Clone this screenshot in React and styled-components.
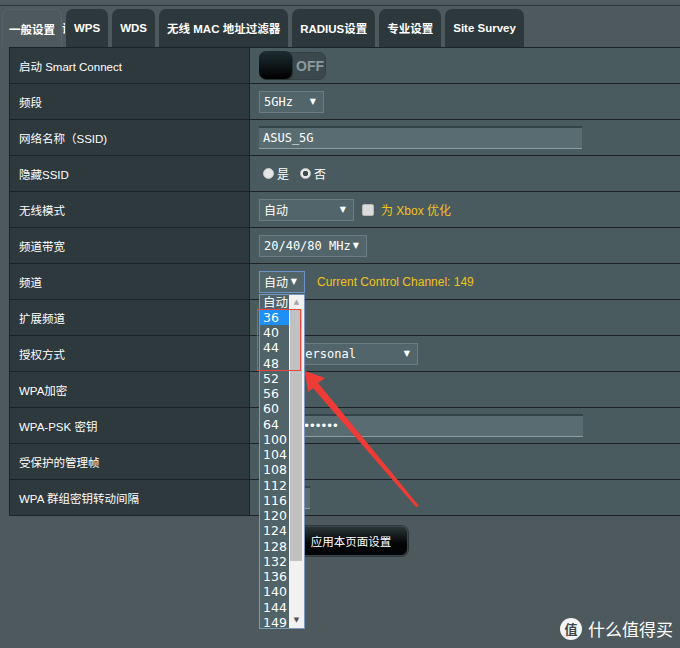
import React from "react";
import styled, { createGlobalStyle } from "styled-components";

const Global = createGlobalStyle`
  html, body { margin: 0; padding: 0; background: #4e595d; overflow: hidden; }
  body { width: 680px; height: 648px; font-family: "Liberation Sans", "Noto Sans CJK SC", sans-serif; }
  * { box-sizing: border-box; }
`;

const Page = styled.div`
  position: relative;
  width: 680px;
  height: 648px;
  overflow: hidden;
  background: #4e595d;
`;

const Frame = styled.div`
  margin-top: 5px;
  border-top: 1px solid #2c3538;
  padding-top: 3px;
  width: 700px;
`;

const TabBar = styled.div`
  display: flex;
  gap: 4px;
  height: 38px;
  padding-left: 2px;
`;

const Tab = styled.div`
  display: flex;
  align-items: center;
  padding: 0 ${(p) => (p.$active ? "6px" : "8px")};
  border-radius: 7px 7px 0 0;
  background: ${(p) => (p.$active ? "#4e595d" : "#2d383c")};
  border: ${(p) => (p.$active ? "1px solid #576266" : "none")};
  border-bottom: none;
  color: #fff;
  font-size: 11.5px;
  font-weight: bold;
  white-space: nowrap;
`;

const Sliver = styled.div`
  width: 3px;
  overflow: hidden;
  display: flex;
  align-items: center;
  margin-left: -4px;
  margin-right: -3px;
  color: #fff;
  font-size: 11.5px;
  font-weight: bold;
`;

const Table = styled.div`
  margin-left: 9px;
  width: 684px;
  border-top: 1px solid #1d2325;
  border-left: 1px solid #1d2325;
`;

const Row = styled.div`
  display: grid;
  grid-template-columns: 240px 1fr;
  height: 36px;
  border-bottom: 1px solid #1d2325;
`;

const Label = styled.div`
  display: flex;
  align-items: center;
  padding-left: 9px;
  background: #2e393d;
  border-right: 1px solid #1d2325;
  color: #fff;
  font-size: 11.5px;
`;

const Value = styled.div`
  display: flex;
  align-items: center;
  padding-left: 9px;
  background: #4a5b60;
  color: #fff;
  font-size: 12px;
`;

const Toggle = styled.div`
  display: flex;
  align-items: center;
  width: 67px;
  height: 28px;
  border-radius: 7px;
  background: #3b494d;
  border: 1px solid #34413f;
`;

const Knob = styled.div`
  width: 33px;
  height: 28px;
  margin: -1px 0 0 -1px;
  border-radius: 7px;
  background: linear-gradient(#1d2d31, #000);
  box-shadow: 1px 1px 0 #233;
`;

const OffText = styled.span`
  margin-left: 4px;
  color: #8e999c;
  font-size: 14px;
  font-weight: bold;
`;

const Select = styled.div`
  position: relative;
  display: inline-flex;
  align-items: center;
  justify-content: space-between;
  width: ${(p) => p.$w}px;
  height: 22px;
  padding: 0 7px 0 ${(p) => (p.$pl != null ? p.$pl : 4)}px;
  background: #51656a;
  border: 1px solid ${(p) => (p.$focus ? "#6d93cc" : "#6b7d82")};
  color: #fff;
  font-family: "DejaVu Sans Mono", "Noto Sans CJK SC", monospace;
  font-size: 12px;
  white-space: nowrap;
`;

const Caret = styled.span`
  font-size: 8px;
  color: #fff;
  font-family: "DejaVu Sans", sans-serif;
`;

const Input = styled.div`
  display: flex;
  align-items: center;
  width: ${(p) => p.$w}px;
  height: 23px;
  padding-left: 4px;
  background: #596c72;
  border-top: 2px solid #34424a;
  border-bottom: 1px solid #8d9ea2;
  color: #fff;
  font-family: "DejaVu Sans Mono", monospace;
  font-size: 12px;
  letter-spacing: ${(p) => (p.$dots ? "-1.5px" : "0")};
`;

const RadioGroup = styled.div`
  display: flex;
  align-items: center;
  gap: 3px;
  padding-left: 4px;
  font-size: 12px;
`;

const Radio = styled.span`
  display: inline-block;
  width: 11px;
  height: 11px;
  border-radius: 50%;
  background: ${(p) => (p.$on ? "radial-gradient(circle, #3f4a4e 0 2.5px, #e8e8e8 3px)" : "#e6e6e6")};
  border: 1px solid #c9c9c9;
  margin-left: ${(p) => (p.$gap ? "8px" : "0")};
`;

const Check = styled.span`
  display: inline-block;
  width: 12px;
  height: 12px;
  margin: 0 7px 0 8px;
  border-radius: 2px;
  background: #dcdcdc;
  border: 1px solid #b8b8b8;
`;

const Note = styled.span`
  color: #f2c218;
  font-size: 12px;
  margin-left: ${(p) => p.$ml || 0}px;
`;

const ChannelWrap = styled.div`
  position: relative;
  display: inline-flex;
`;

const ListBox = styled.div`
  position: absolute;
  left: 0;
  top: 23px;
  width: 46px;
  height: 335px;
  display: flex;
  border: 1px solid #7b98bb;
  background: #4f6369;
  overflow: hidden;
  z-index: 5;
`;

const Options = styled.div`
  flex: 1;
  overflow: hidden;
`;

const Option = styled.div`
  height: 15.25px;
  line-height: 15.25px;
  padding-left: 3px;
  color: #fff;
  font-family: "DejaVu Sans", "Noto Sans CJK SC", sans-serif;
  font-size: 12.5px;
  background: ${(p) => (p.$sel ? "#1e8ff5" : "transparent")};
`;

const ScrollBar = styled.div`
  width: 15px;
  display: flex;
  flex-direction: column;
  background: #f1f1f1;
`;

const ScrollBtn = styled.div`
  height: 15px;
  display: flex;
  align-items: center;
  justify-content: center;
  color: ${(p) => (p.$dark ? "#505050" : "#a3a3a3")};
  font-size: 7px;
  font-family: "DejaVu Sans", sans-serif;
`;

const Thumb = styled.div`
  height: 251px;
  margin: 0 2px 0 1px;
  background: #c1c1c1;
`;

const Spacer = styled.div`
  flex: 1;
`;

const RedBox = styled.div`
  position: absolute;
  left: -2px;
  top: 38px;
  width: 44px;
  height: 62px;
  border: 1.5px solid #e8453c;
  z-index: 6;
`;

const Footer = styled.div`
  display: flex;
  justify-content: center;
  width: 684px;
  margin-left: 9px;
  padding-top: 10px;
`;

const Button = styled.div`
  display: flex;
  align-items: center;
  justify-content: center;
  height: 30px;
  padding: 0 16px;
  border-radius: 7px;
  background: linear-gradient(#2a3436, #020405 60%);
  border: 1px solid #3c4649;
  box-shadow: 0 0 0 1px #2d3639;
  color: #fff;
  font-size: 11.5px;
`;

const Overlay = styled.svg`
  position: absolute;
  left: 0;
  top: 0;
  pointer-events: none;
  z-index: 7;
`;

const Watermark = styled.div`
  position: absolute;
  right: 7px;
  bottom: 7px;
  display: flex;
  align-items: center;
  gap: 6px;
  color: #fff;
  font-family: "Noto Sans CJK SC", sans-serif;
  font-size: 17px;
  z-index: 8;
`;

const Badge = styled.span`
  display: inline-flex;
  align-items: center;
  justify-content: center;
  width: 22px;
  height: 22px;
  border-radius: 50%;
  background: #f4f4f4;
  color: #3e4649;
  font-size: 13px;
  font-weight: bold;
`;

const channels = ["自动", "36", "40", "44", "48", "52", "56", "60", "64", "100", "104", "108", "112", "116", "120", "124", "128", "132", "136", "140", "144", "149"];

export default function App() {
  return (
    <Page>
      <Global />
      <Frame>
        <TabBar>
          <Tab $active>一般设置</Tab>
          <Sliver>设</Sliver>
          <Tab>WPS</Tab>
          <Tab>WDS</Tab>
          <Tab>无线 MAC 地址过滤器</Tab>
          <Tab>RADIUS设置</Tab>
          <Tab>专业设置</Tab>
          <Tab>Site Survey</Tab>
        </TabBar>
      </Frame>
      <Table>
        <Row>
          <Label>启动 Smart Connect</Label>
          <Value>
            <Toggle>
              <Knob />
              <OffText>OFF</OffText>
            </Toggle>
          </Value>
        </Row>
        <Row>
          <Label>频段</Label>
          <Value>
            <Select $w={65}>5GHz<Caret>▼</Caret></Select>
          </Value>
        </Row>
        <Row>
          <Label>网络名称（SSID)</Label>
          <Value>
            <Input $w={323}>ASUS_5G</Input>
          </Value>
        </Row>
        <Row>
          <Label>隐藏SSID</Label>
          <Value>
            <RadioGroup>
              <Radio />是<Radio $on $gap />否
            </RadioGroup>
          </Value>
        </Row>
        <Row>
          <Label>无线模式</Label>
          <Value>
            <Select $w={95}>自动<Caret>▼</Caret></Select>
            <Check />
            <Note>为 Xbox 优化</Note>
          </Value>
        </Row>
        <Row>
          <Label>频道带宽</Label>
          <Value>
            <Select $w={108}>20/40/80 MHz<Caret>▼</Caret></Select>
          </Value>
        </Row>
        <Row>
          <Label>频道</Label>
          <Value>
            <ChannelWrap>
              <Select $w={46} $focus>自动<Caret>▼</Caret></Select>
              <ListBox>
                <Options>
                  {channels.map((c) => (
                    <Option key={c} $sel={c === "36"}>{c}</Option>
                  ))}
                </Options>
                <ScrollBar>
                  <ScrollBtn>▲</ScrollBtn>
                  <Thumb />
                  <Spacer />
                  <ScrollBtn $dark>▼</ScrollBtn>
                </ScrollBar>
              </ListBox>
              <RedBox />
            </ChannelWrap>
            <Note $ml={12}>Current Control Channel: 149</Note>
          </Value>
        </Row>
        <Row>
          <Label>扩展频道</Label>
          <Value />
        </Row>
        <Row>
          <Label>授权方式</Label>
          <Value>
            <Select $w={159} $pl={2}>WPA2-Personal<Caret>▼</Caret></Select>
          </Value>
        </Row>
        <Row>
          <Label>WPA加密</Label>
          <Value />
        </Row>
        <Row>
          <Label>WPA-PSK 密钥</Label>
          <Value>
            <Input $w={324} $dots>•••••••••••••</Input>
          </Value>
        </Row>
        <Row>
          <Label>受保护的管理帧</Label>
          <Value />
        </Row>
        <Row>
          <Label>WPA 群组密钥转动间隔</Label>
          <Value>
            <Input $w={51}>3600</Input>
          </Value>
        </Row>
      </Table>
      <Footer>
        <Button>应用本页面设置</Button>
      </Footer>
      <Overlay width="680" height="648" viewBox="0 0 680 648">
        <polygon
          points="305,371 325,378 318,383 419,506 416,507 313,388 308,392"
          fill="#ef3b36"
        />
      </Overlay>
      <Watermark>
        <Badge>值</Badge>
        什么值得买
      </Watermark>
    </Page>
  );
}
